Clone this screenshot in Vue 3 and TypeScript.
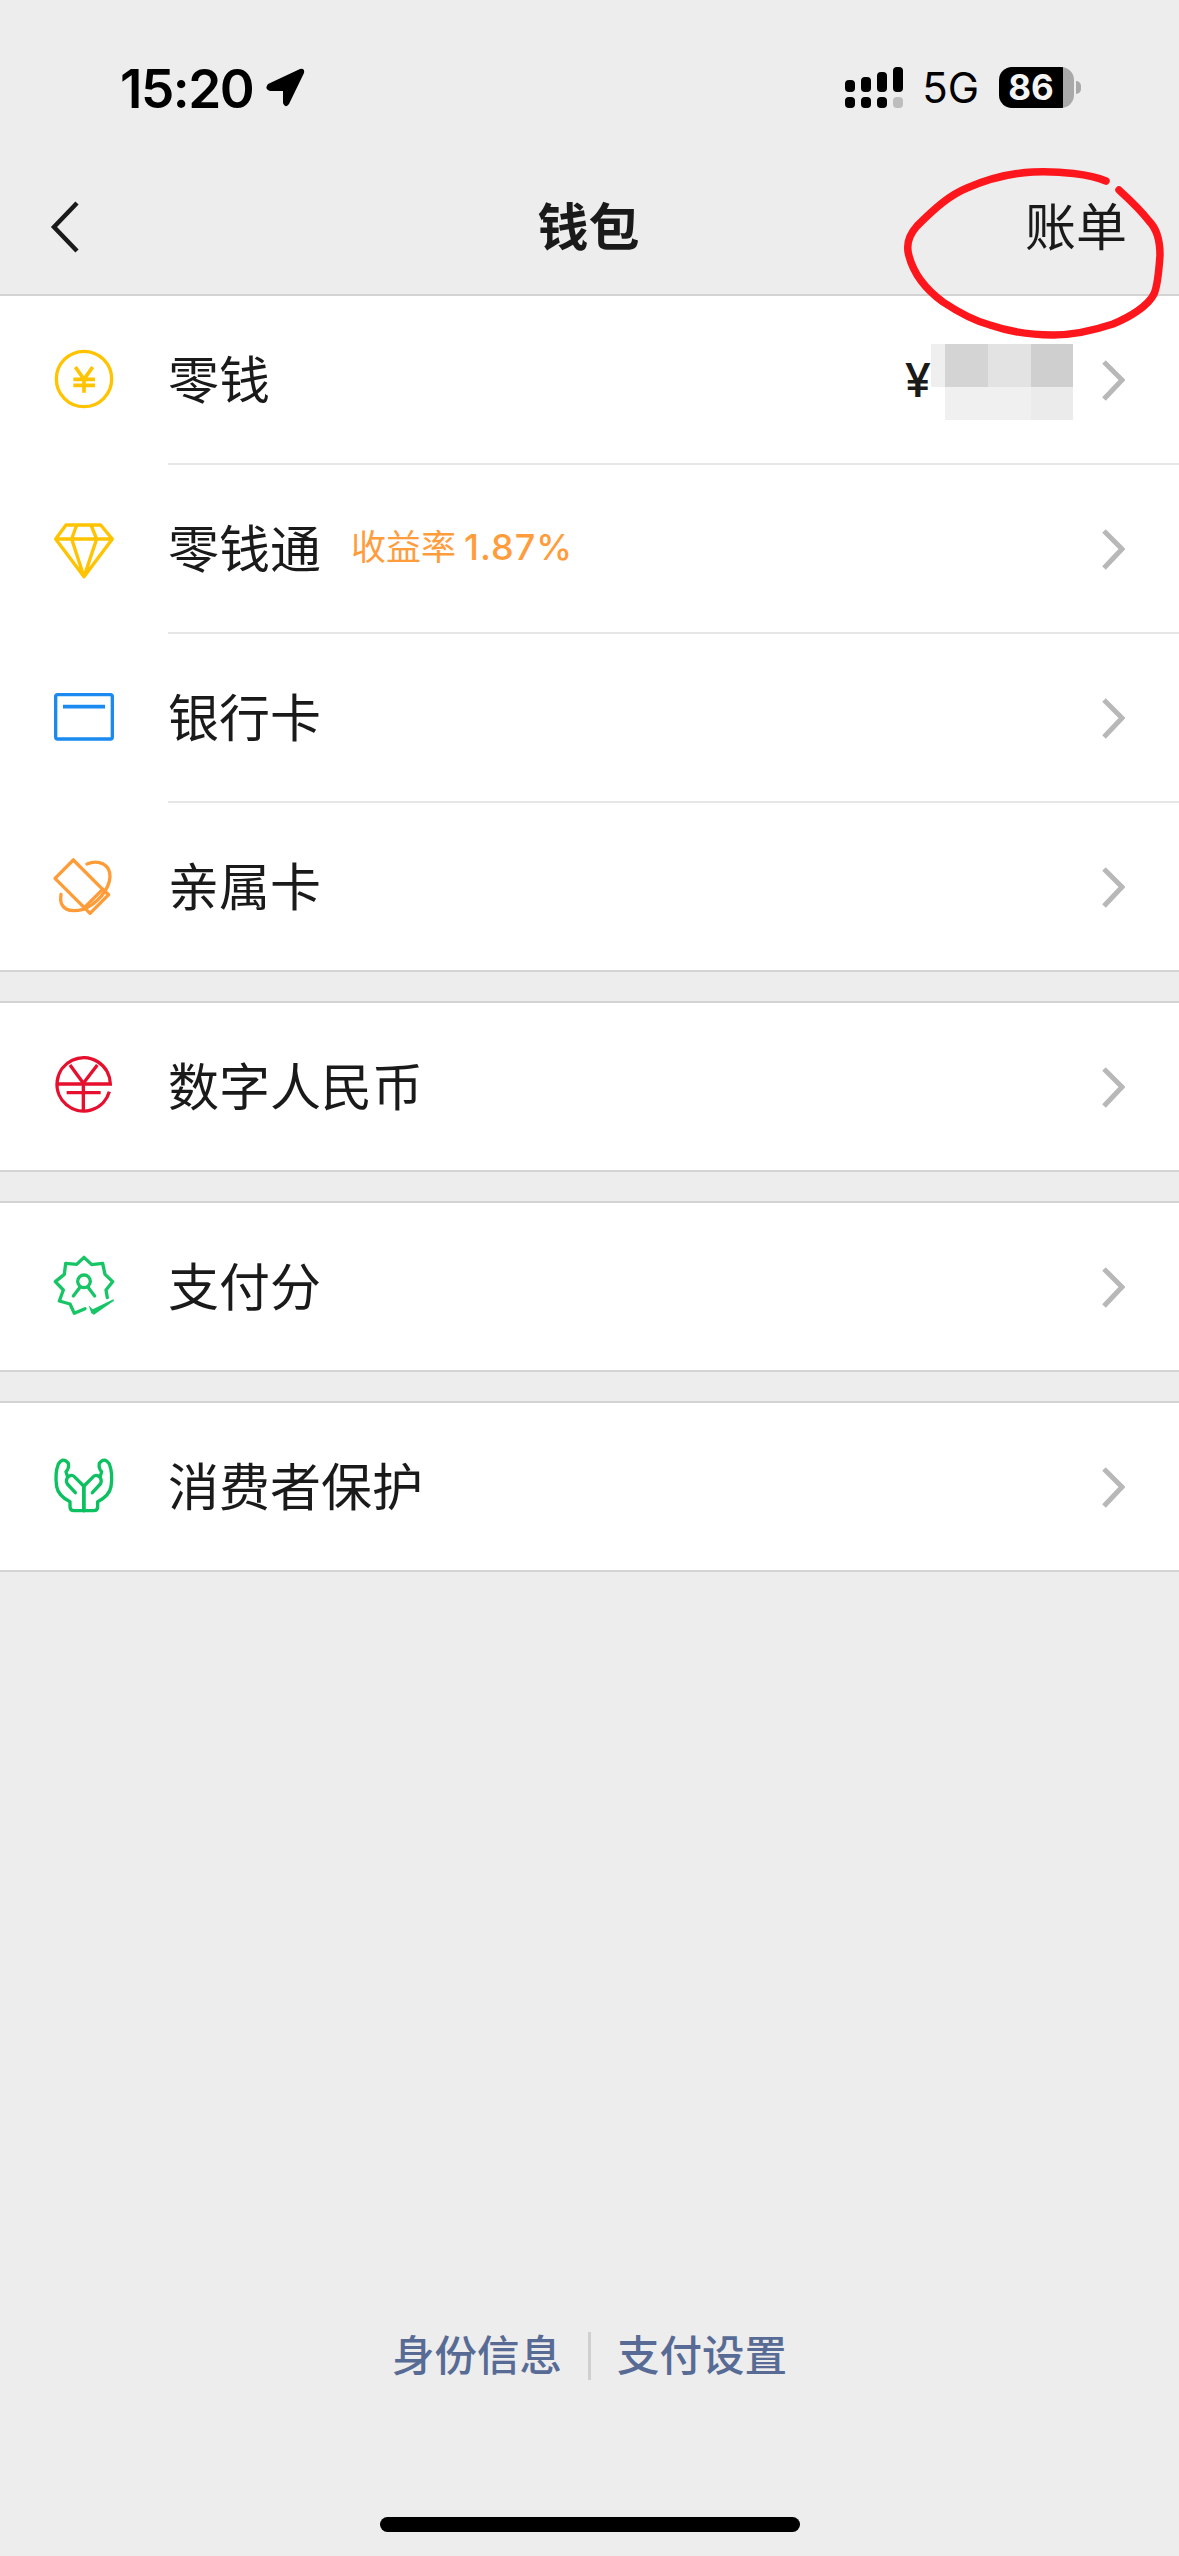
<script setup lang="ts">
interface Row { label: string; key: string; badge?: string; balance?: boolean }
const groups: Row[][] = [
  [
    { label: '零钱', key: 'coin', balance: true },
    { label: '零钱通', key: 'gem', badge: '收益率' },
    { label: '银行卡', key: 'card' },
    { label: '亲属卡', key: 'family' },
  ],
  [{ label: '数字人民币', key: 'ecny' }],
  [{ label: '支付分', key: 'score' }],
  [{ label: '消费者保护', key: 'hands' }],
]
const signalTop = [
  { x: 0, y: 13, h: 12 },
  { x: 16, y: 10, h: 15 },
  { x: 32, y: 5, h: 20 },
  { x: 48, y: 0, h: 25 },
]
</script>

<template>
  <div class="page">
    <header class="status">
      <div class="status-left">
        <span class="time">15:20</span>
        <svg class="loc" width="40" height="40" viewBox="0 0 40 40">
          <path d="M3 16 L35 1 Q40 0 39 5 L24 36 Q20 41 18 35 L18 23 L5 23 Q-1 21 3 16 Z" fill="#000" />
        </svg>
      </div>
      <div class="status-right">
        <svg class="signal" width="58" height="41" viewBox="0 0 58 41">
          <rect v-for="b in signalTop" :key="b.x" :x="b.x" :y="b.y" width="10" :height="b.h" rx="4" fill="#000" />
          <rect x="0" y="30" width="10" height="11" rx="4" fill="#000" />
          <rect x="16" y="30" width="10" height="11" rx="4" fill="#000" />
          <rect x="32" y="30" width="10" height="11" rx="4" fill="#000" />
          <rect x="48" y="30" width="10" height="11" rx="4" fill="#bdbdbd" />
        </svg>
        <span class="net">5G</span>
        <div class="battery">
          <div class="battery-body"><span class="battery-level">86</span></div>
          <i class="battery-nub"></i>
        </div>
      </div>
    </header>

    <nav class="nav">
      <svg class="back" width="30" height="54" viewBox="0 0 30 54">
        <path d="M27 3 L4 27 L27 51" fill="none" stroke="#1a1a1a" stroke-width="4.5" />
      </svg>
      <h1 class="title">钱包</h1>
      <span class="bill">账单</span>
    </nav>

    <main class="groups">
      <section v-for="(group, gi) in groups" :key="gi" class="group">
        <div v-for="row in group" :key="row.key" class="row">
          <span class="icon">
            <svg v-if="row.key === 'coin'" width="70" height="70" viewBox="57 72 210 210" fill="none" stroke="#ffc300">
              <circle cx="162" cy="177" r="83" stroke-width="10" />
              <path d="M136 141 L162 178 L188 141 M130 178 H195 M130 196 H195 M162 178 V218" stroke-width="11" />
            </svg>
            <svg v-else-if="row.key === 'gem'" width="70" height="70" viewBox="57 579 210 210" fill="none" stroke="#ffc300" stroke-width="10" stroke-linejoin="round">
              <path d="M108 615 H212 L247 657 L162 770 L77 657 Z M77 657 H247 M140 615 L125 657 L162 770 L200 657 L183 615" />
            </svg>
            <svg v-else-if="row.key === 'card'" width="70" height="70" viewBox="57 66 210 210" fill="none" stroke="#1a8af0">
              <rect x="77" y="104" width="170" height="133" rx="6" stroke-width="10" />
              <path d="M99 140 H225" stroke-width="11" />
            </svg>
            <svg v-else-if="row.key === 'family'" width="70" height="70" viewBox="57 573 210 210" fill="none" stroke="#ff9c38" stroke-width="10" stroke-linejoin="round" stroke-linecap="round">
              <path d="M130 600 L75 655 L180 760 L236 704 L218 688 L163 743" />
              <path d="M130 600 L218 688" />
              <path d="M171 612 C205 598 240 612 240 650 C238 690 200 732 160 748 C120 758 85 750 93 703" />
            </svg>
            <svg v-else-if="row.key === 'ecny'" width="70" height="70" viewBox="57 63 210 210" fill="none" stroke="#e60f2d" stroke-width="10">
              <path d="M238 185 A80 80 0 1 1 241 162 H80" />
              <path d="M120 105 L160 160 L202 105 M110 188 H212 M160 160 V246" />
            </svg>
            <svg v-else-if="row.key === 'score'" width="70" height="70" viewBox="57 63 210 210" fill="none" stroke="#18c566" stroke-width="10" stroke-linecap="round" stroke-linejoin="round">
              <path d="M232 203 L228 180 L248 155 L225 133 L218 100 L185 104 L162 82 L140 103 L107 100 L103 133 L76 155 L100 180 L88 213 L120 222 L133 250 L165 236" />
              <circle cx="162" cy="154" r="19" />
              <path d="M130 198 L150 172 M194 198 L174 172" />
              <path d="M176 226 L188 238 L250 208 L252 212 L192 254 L184 250 Z" fill="#18c566" stroke="none" />
            </svg>
            <svg v-else width="70" height="70" viewBox="57 663 210 210" fill="none" stroke="#0cc160" stroke-width="10" stroke-linecap="round" stroke-linejoin="round">
              <path d="M161 842 H132 Q120 842 120 830 V815 Q85 798 80 770 Q74 730 85 702 Q100 680 115 700 Q118 715 108 725 L112 738" />
              <path d="M136 788 L112 762 Q104 748 118 738 Q128 733 135 742 L161 768 V842" />
              <g transform="translate(323 0) scale(-1 1)">
                <path d="M161 842 H132 Q120 842 120 830 V815 Q85 798 80 770 Q74 730 85 702 Q100 680 115 700 Q118 715 108 725 L112 738" />
                <path d="M136 788 L112 762 Q104 748 118 738 Q128 733 135 742 L161 768 V842" />
              </g>
            </svg>
          </span>
          <div class="body">
            <span class="label">{{ row.label }}</span>
            <span v-if="row.badge" class="badge">{{ row.badge }}<b class="rate">1.87%</b></span>
            <span class="spacer"></span>
            <template v-if="row.balance">
              <span class="yen">¥</span>
              <svg class="mosaic" width="142" height="76" viewBox="0 0 142 76">
                <rect x="0" y="0" width="14" height="43" fill="#efefef" />
                <rect x="14" y="0" width="43" height="43" fill="#d4d4d4" />
                <rect x="57" y="0" width="43" height="43" fill="#e3e3e3" />
                <rect x="100" y="0" width="42" height="43" fill="#cfcfcf" />
                <rect x="14" y="43" width="86" height="33" fill="#f0f0f0" />
                <rect x="100" y="43" width="42" height="33" fill="#ebebeb" />
              </svg>
            </template>
            <svg class="chev" width="24" height="42" viewBox="0 0 24 42">
              <path d="M3 3 L21 21 L3 40" fill="none" stroke="#b8b8b8" stroke-width="5" />
            </svg>
          </div>
        </div>
      </section>
    </main>

    <footer class="foot">
      <div class="links">
        <span>身份信息</span>
        <i class="links-divider"></i>
        <span>支付设置</span>
      </div>
      <div class="home"></div>
    </footer>

    <svg class="scribble" width="1179" height="2556" viewBox="0 0 1179 2556">
      <path
        d="M1106 181 C1090 174 1060 171 1033 172 C1012 173 990 178 967 188 C950 195 936 207 917 226 C908 236 906 246 909 256 C914 275 928 291 943 302 C958 312 975 321 990 325 C1010 332 1032 335 1053 335 C1075 335 1095 330 1113 324 C1130 317 1148 306 1154 294 C1158 285 1159 270 1160 255 C1160 240 1156 228 1149 221 C1140 209 1130 200 1119 190"
        fill="none"
        stroke="#fd161c"
        stroke-width="7.5"
        stroke-linecap="round"
      />
    </svg>
  </div>
</template>

<style scoped>
.page {
  position: relative;
  display: flex;
  flex-direction: column;
  width: 1179px;
  height: 2556px;
  overflow: hidden;
  background: #ededed;
  color: #1a1a1a;
  font-family: "Noto Sans CJK SC", "Liberation Sans", sans-serif;
}
.status {
  height: 160px;
  box-sizing: border-box;
  padding: 67px 98px 0 120px;
  display: flex;
  justify-content: space-between;
  align-items: flex-start;
  flex: none;
}
.status-left {
  display: flex;
  align-items: center;
  gap: 12px;
  height: 41px;
}
.time {
  font-family: Inter, "Liberation Sans", sans-serif;
  font-size: 53px;
  font-weight: 600;
  line-height: 41px;
  letter-spacing: -1.5px;
  color: #000;
  padding-top: 3px;
}
.status-right {
  display: flex;
  align-items: center;
  height: 41px;
}
.net {
  margin-left: 19px;
  font-family: Inter, "Liberation Sans", sans-serif;
  font-size: 42px;
  font-weight: 400;
  line-height: 41px;
  color: #000;
}
.battery {
  margin-left: 20px;
  display: flex;
  align-items: center;
  gap: 2px;
}
.battery-body {
  width: 75px;
  height: 41px;
  border-radius: 13px;
  background: linear-gradient(to right, #000 64px, #a9a9a9 64px);
  display: flex;
  align-items: center;
  justify-content: center;
  overflow: hidden;
}
.battery-level {
  width: 64px;
  margin-right: 11px;
  text-align: center;
  font-family: Inter, "Liberation Sans", sans-serif;
  font-size: 35px;
  font-weight: 700;
  line-height: 41px;
  color: #f4f4f4;
}
.battery-nub {
  width: 5px;
  height: 13px;
  border-radius: 0 6px 6px 0;
  background: #a9a9a9;
}
.nav {
  height: 134px;
  flex: none;
  box-sizing: border-box;
  padding: 0 52px 0 50px;
  display: grid;
  grid-template-columns: 1fr auto 1fr;
  align-items: center;
}
.back { display: block; }
.title {
  margin: -6px 0 0;
  font-size: 51px;
  font-weight: 700;
  line-height: 60px;
}
.bill {
  justify-self: end;
  margin-top: -6px;
  font-size: 51px;
  font-weight: 400;
  line-height: 60px;
}
.groups {
  display: flex;
  flex-direction: column;
  gap: 29px;
}
.group {
  background: #fff;
  border-top: 2px solid #d3d3d3;
  border-bottom: 2px solid #d3d3d3;
}
.row {
  display: flex;
  padding-left: 49px;
}
.icon {
  flex: none;
  width: 70px;
  height: 70px;
  margin: 48px 49px 0 0;
}
.icon svg { display: block; }
.body {
  flex: 1;
  height: 167px;
  padding-right: 54px;
  display: flex;
  align-items: center;
}
.row:not(:last-child) .body { border-bottom: 2px solid #e6e6e6; }
.label {
  margin-top: -6px;
  font-size: 51px;
  line-height: 60px;
  font-weight: 400;
}
.badge {
  margin: -6px 0 0 30px;
  font-size: 35px;
  line-height: 46px;
  font-weight: 400;
  color: #ff9c3b;
}
.rate {
  margin-left: 8px;
  font-family: Inter, "Liberation Sans", sans-serif;
  font-size: 36px;
  font-weight: 500;
  letter-spacing: 1px;
}
.spacer { flex: 1; }
.yen {
  font-family: Inter, "Liberation Sans", sans-serif;
  font-size: 47px;
  font-weight: 500;
  line-height: 50px;
}
.mosaic {
  margin: 5px 28px 0 0;
  display: block;
}
.chev { display: block; }
.foot {
  margin-top: auto;
  display: flex;
  flex-direction: column;
  align-items: center;
  padding-bottom: 24px;
}
.links {
  display: flex;
  align-items: center;
  gap: 26px;
  height: 48px;
  font-size: 42.5px;
  font-weight: 500;
  line-height: 48px;
  color: #576b95;
}
.links span { margin-top: -6px; }
.links-divider {
  width: 3px;
  height: 48px;
  background: #d0d0d0;
}
.home {
  width: 420px;
  height: 15px;
  margin-top: 137px;
  border-radius: 8px;
  background: #000;
}
.scribble {
  position: absolute;
  left: 0;
  top: 0;
  pointer-events: none;
}
</style>
